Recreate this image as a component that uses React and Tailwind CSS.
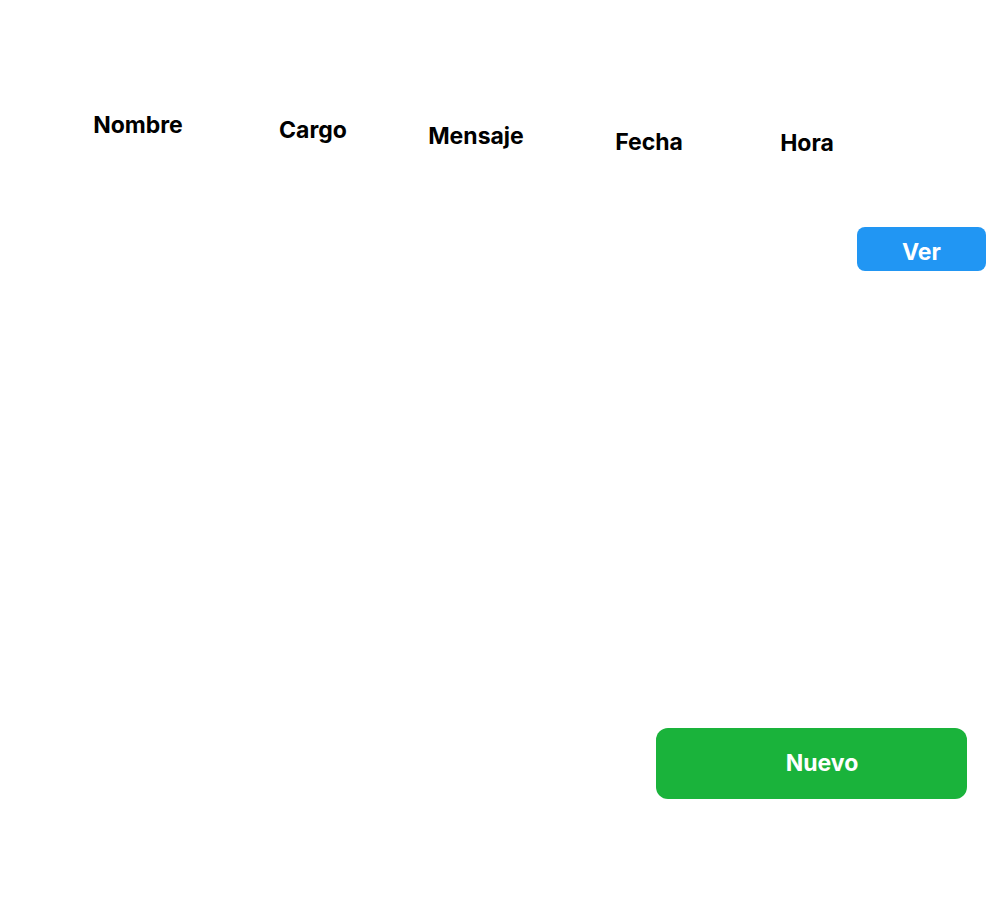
const columns = [
  { label: 'Nombre', width: 'w-[176px]', offset: 'pt-[110px]' },
  { label: 'Cargo', width: 'w-[174px]', offset: 'pt-[115px]' },
  { label: 'Mensaje', width: 'w-[152px]', offset: 'pt-[121px]' },
  { label: 'Fecha', width: 'w-[194px]', offset: 'pt-[127px]' },
  { label: 'Hora', width: 'w-[122px]', offset: 'pt-[128px]' },
];

export default function App() {
  return (
    <div className="min-h-[906px] w-full bg-white font-['Inter',sans-serif] text-black">
      <div className="flex items-start pl-[50px]">
        {columns.map((col) => (
          <div key={col.label} className={`${col.width} ${col.offset} text-center text-[23px] font-bold leading-[30px]`}>
            {col.label}
          </div>
        ))}
      </div>

      <div className="flex justify-end pr-[20px] pt-[69px]">
        <button className="h-[44px] w-[129px] rounded-lg bg-[#2196f3] pt-[6px] text-[23px] font-bold text-white">
          Ver
        </button>
      </div>

      <div className="flex justify-end pr-[39px] pt-[457px]">
        <button className="h-[71px] w-[311px] rounded-xl bg-[#1ab33b] pl-[21px] text-[23px] font-bold text-white">
          Nuevo
        </button>
      </div>
    </div>
  );
}
